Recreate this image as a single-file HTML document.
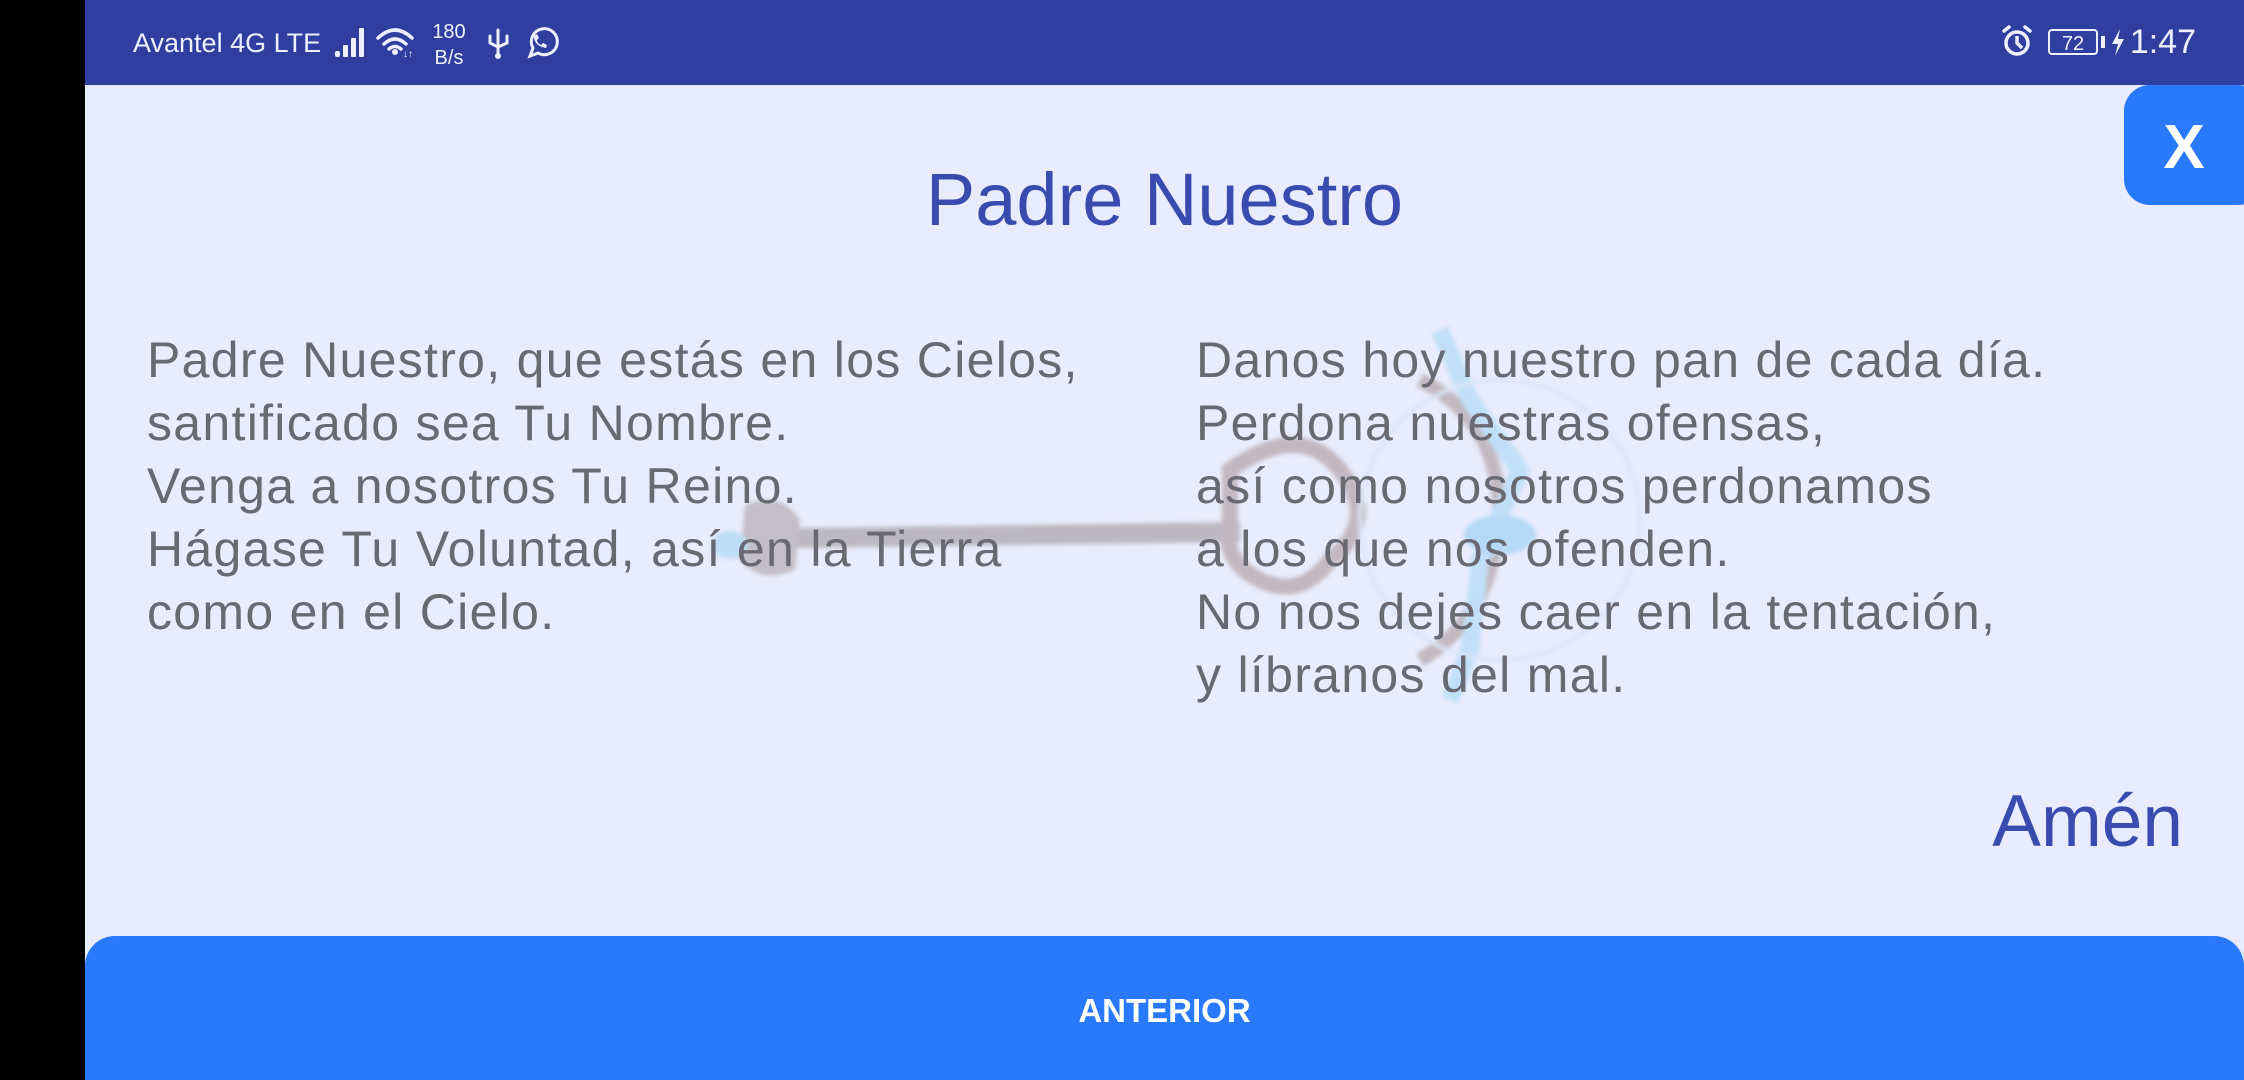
<!DOCTYPE html>
<html><head><meta charset="utf-8"><style>
*{margin:0;padding:0;box-sizing:border-box}
html,body{width:2244px;height:1080px;overflow:hidden}
body{background:#e9ecfd;font-family:"Liberation Sans",sans-serif;position:relative}
.a{position:absolute;white-space:nowrap}
.txt{font-size:50px;line-height:63px;color:#686973;letter-spacing:1.3px}
</style></head><body>
<div class="a" style="left:0;top:0;width:85px;height:1080px;background:#000"></div>
<div class="a" style="left:85px;top:0;width:2159px;height:85px;background:#2f3e9f"></div>
<div class="a" style="left:133px;top:30px;font-size:27px;line-height:27px;color:#eef0ff">Avantel 4G LTE</div>
<svg class="a" style="left:330px;top:20px" width="240" height="50" viewBox="330 20 240 50">
<g fill="#eef0ff">
<rect x="335" y="51" width="5" height="6" rx="2"/><rect x="343" y="45" width="5" height="12" rx="1"/><rect x="351" y="38" width="5" height="19" rx="1"/><rect x="359" y="28" width="5" height="29" rx="1"/>
<circle cx="395" cy="52" r="3"/>
</g>
<g fill="none" stroke="#eef0ff" stroke-width="3.5" stroke-linecap="round">
<path d="M378 38 Q395 22 412 38"/><path d="M384 44 Q395 34 406 44"/><path d="M389 49 Q395 44 401 49"/>
</g>
<text x="403" y="57" font-size="10" fill="#eef0ff">↓↑</text>
<text x="449" y="38" font-size="20" text-anchor="middle" fill="#eef0ff" font-family="Liberation Sans">180</text>
<text x="449" y="64" font-size="20" text-anchor="middle" fill="#eef0ff" font-family="Liberation Sans">B/s</text>
<g fill="none" stroke="#eef0ff" stroke-width="3" stroke-linecap="round">
<path d="M498 30 V55"/><path d="M490 36 V43 L498 47"/><path d="M507 36 V43 L498 47"/>
</g>
<circle cx="498" cy="56" r="3" fill="#eef0ff"/>
<g fill="none" stroke="#eef0ff" stroke-width="3">
<path d="M530 56 L533 48 A13 13 0 1 1 538 53 Z"/>
</g>
<path d="M534 36 Q534 46 546 48 L547 45 L543 43 L541 45 Q537 43 537 40 L539 38 L537 34 Z" fill="#eef0ff"/>
</svg>
<svg class="a" style="left:1995px;top:20px" width="140" height="45" viewBox="1995 20 140 45">
<g fill="none" stroke="#eef0ff" stroke-width="3.5">
<circle cx="2017" cy="43" r="11"/><path d="M2017 36 V43 L2022 48"/>
<path d="M2004 31 L2009 27" stroke-linecap="round"/><path d="M2030 31 L2025 27" stroke-linecap="round"/>
</g>
<rect x="2049" y="30" width="48" height="24" rx="3" fill="none" stroke="#eef0ff" stroke-width="2"/>
<text x="2073" y="50" font-size="20" text-anchor="middle" fill="#eef0ff" font-family="Liberation Sans">72</text>
<rect x="2101" y="36" width="4" height="12" fill="#eef0ff"/>
<path d="M2120 29 L2112 44 L2118 44 L2115 56 L2124 39 L2118 39 Z" fill="#eef0ff"/>
</svg>
<div class="a" style="right:48px;top:25px;font-size:34px;line-height:34px;color:#eef0ff">1:47</div>

<svg class="a" style="left:700px;top:300px;opacity:.35;filter:blur(2px)" width="1000" height="440" viewBox="700 300 1000 440">
<path d="M790 528 L1240 522 L1240 542 L790 548 Z" fill="#6b5a55"/>
<path d="M745 505 Q780 490 800 520 L795 570 Q760 585 740 560 Z" fill="#7d6a66"/>
<ellipse cx="730" cy="545" rx="18" ry="14" fill="#6fc3ea"/>
<path d="M1230 470 Q1300 420 1340 470 Q1380 520 1330 560 Q1300 600 1260 580 Q1220 560 1230 520 Z" fill="none" stroke="#7b5a4f" stroke-width="16"/>
<path d="M1420 380 Q1500 420 1500 520 Q1490 620 1420 660" fill="none" stroke="#7b5a4f" stroke-width="14"/>
<path d="M1440 330 L1470 400 L1520 470 L1480 560 L1470 650 L1450 700" fill="none" stroke="#78c9ef" stroke-width="18"/>
<ellipse cx="1500" cy="535" rx="36" ry="20" fill="#5ab8e8"/>
<circle cx="1500" cy="520" r="140" fill="none" stroke="#bfdcef" stroke-width="4"/>
</svg>

<div class="a" style="left:85px;width:2159px;top:162px;text-align:center;font-size:74px;line-height:75px;color:#3a4bb0">Padre Nuestro</div>
<div class="a txt" style="left:147px;top:329px">Padre Nuestro, que estás en los Cielos,<br>santificado sea Tu Nombre.<br>Venga a nosotros Tu Reino.<br>Hágase Tu Voluntad, así en la Tierra<br>como en el Cielo.</div>
<div class="a txt" style="left:1196px;top:329px">Danos hoy nuestro pan de cada día.<br>Perdona nuestras ofensas,<br>así como nosotros perdonamos<br>a los que nos ofenden.<br>No nos dejes caer en la tentación,<br>y líbranos del mal.</div>
<div class="a" style="right:61px;top:787px;font-size:73px;line-height:70px;color:#3a4bb0">Amén</div>

<div class="a" style="left:2124px;top:85px;width:140px;height:120px;border-radius:26px;background:#2979fc"></div>
<div class="a" style="left:2124px;width:120px;top:117px;text-align:center;font-size:62px;line-height:62px;font-weight:bold;color:#fff">X</div>

<div class="a" style="left:85px;top:936px;width:2159px;height:144px;border-radius:30px 30px 0 0;background:#2979fc"></div>
<div class="a" style="left:85px;width:2159px;top:993px;text-align:center;font-size:33px;line-height:36px;font-weight:bold;color:#fff">ANTERIOR</div>
</body></html>
